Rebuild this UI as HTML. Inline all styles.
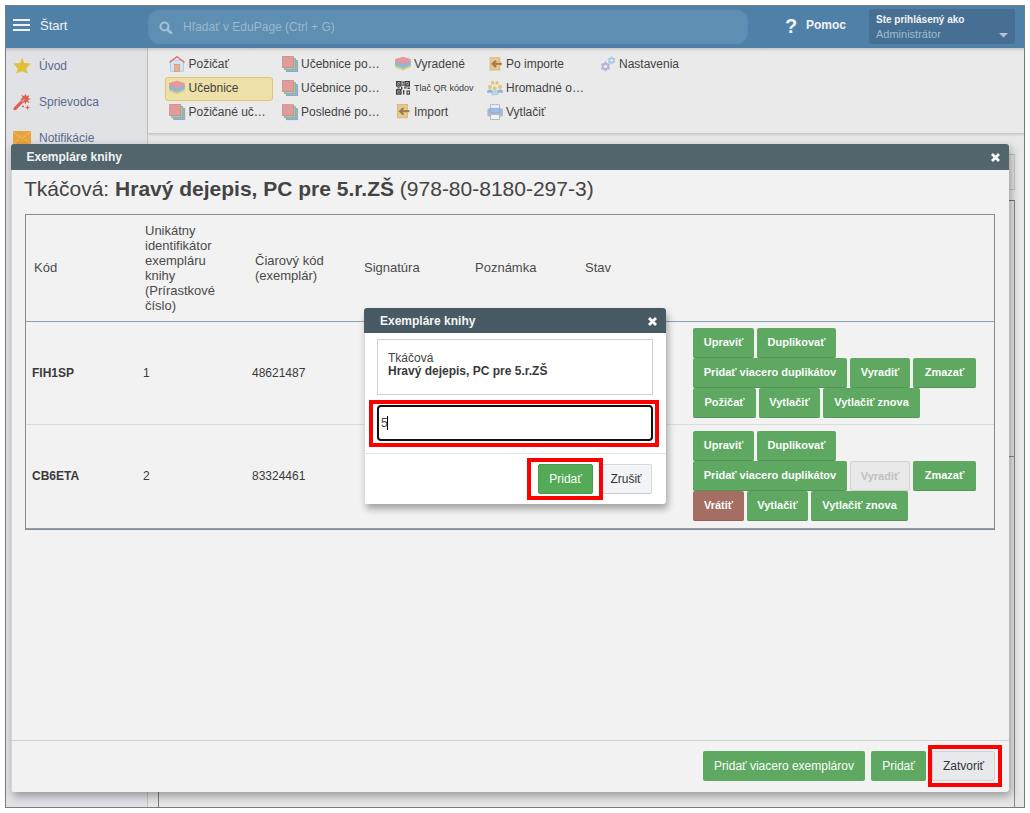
<!DOCTYPE html>
<html><head><meta charset="utf-8">
<style>
*{box-sizing:border-box;margin:0;padding:0}
html,body{width:1030px;height:813px;background:#fff;overflow:hidden;font-family:"Liberation Sans",sans-serif;position:relative}
.a{position:absolute}
.t{position:absolute;white-space:nowrap;line-height:1}
#frame{position:absolute;left:5px;top:5px;width:1020px;height:803px;border:1px solid #7b7b7b;overflow:hidden;background:#e8e8e8}
.btn{position:absolute;height:30px;background:#5fa862;border-bottom:1px solid #529557;border-radius:2px;color:#fbfdfb;font-size:11px;font-weight:bold;line-height:29px;text-align:center;white-space:nowrap}
.btn.br{background:#a56e63;border-bottom-color:#956055}
.btn.dis{background:#e9e9e9;border:1px solid #d2d2d2;color:#c0c0c0;line-height:28px}
.fbtn{position:absolute;height:30px;background:#5fa862;border-radius:2px;color:#fbfdfb;font-size:12px;line-height:30px;text-align:center;white-space:nowrap}
.th{position:absolute;font-size:13px;line-height:15px;color:#4a4a4a;white-space:nowrap}
.td{position:absolute;font-size:12px;line-height:14px;color:#3a3a3a;white-space:nowrap}
.tb{position:absolute;font-size:12px;color:#434343;white-space:nowrap;line-height:1}
.side{position:absolute;font-size:12px;color:#5a6a8c;white-space:nowrap;line-height:1}
</style></head>
<body>
<div id="frame"></div>

<!-- HEADER -->
<div class="a" style="left:6px;top:6px;width:1018px;height:42px;background:#4f81a8"></div>
<div class="a" style="left:13px;top:19px;width:17px;height:2px;background:#eef2f5"></div>
<div class="a" style="left:13px;top:24px;width:17px;height:2px;background:#eef2f5"></div>
<div class="a" style="left:13px;top:29px;width:17px;height:2px;background:#eef2f5"></div>
<div class="t" style="left:40px;top:19px;font-size:13px;color:#f2f4f6">Štart</div>
<div class="a" style="left:148px;top:9px;width:600px;height:35px;border-radius:12px;background:#5e8eb1;box-shadow:inset 0 1px 1px rgba(0,0,0,.08)"></div>
<svg class="a" style="left:159px;top:21px" width="14" height="13" viewBox="0 0 14 13"><circle cx="5.5" cy="5.5" r="4" fill="none" stroke="#a3bfd5" stroke-width="2.2"/><path d="M8.5 8.5 L12 12" stroke="#a3bfd5" stroke-width="2.6" stroke-linecap="round"/></svg>
<div class="t" style="left:183px;top:21px;font-size:12px;color:#9ab8d0">Hľadať v EduPage (Ctrl + G)</div>
<div class="t" style="left:785px;top:16px;font-size:20px;font-weight:bold;color:#f2f4f6">?</div>
<div class="t" style="left:806px;top:19px;font-size:12px;font-weight:bold;color:#f2f4f6">Pomoc</div>
<div class="a" style="left:869px;top:9px;width:146px;height:35px;border-radius:3px;background:#476f93"></div>
<div class="t" style="left:876px;top:15px;font-size:10px;font-weight:bold;color:#f2f4f6">Ste prihlásený ako</div>
<div class="t" style="left:876px;top:29px;font-size:11px;color:#9fbbd3">Administrátor</div>
<svg class="a" style="left:999px;top:33px" width="9" height="5" viewBox="0 0 9 5"><path d="M0 0 L9 0 L4.5 4.5 Z" fill="#b5c3d0"/></svg>

<!-- SIDEBAR -->
<div class="a" style="left:6px;top:48px;width:141px;height:759px;background:#e1e2e5"></div>
<div class="a" style="left:147px;top:48px;width:1px;height:759px;background:#c4c4c4"></div>
<div class="side" style="left:39px;top:60px">Úvod</div>
<div class="side" style="left:39px;top:96px">Sprievodca</div>
<div class="side" style="left:39px;top:132px">Notifikácie</div>

<!-- CONTENT / TOOLBAR -->
<div class="a" style="left:148px;top:48px;width:876px;height:86px;background:#eaeaea;border-bottom:1px solid #c8c8c8;box-shadow:0 1px 2px rgba(0,0,0,.12)"></div>
<div class="a" style="left:6px;top:48px;width:1018px;height:4px;background:linear-gradient(rgba(80,70,60,.22),rgba(0,0,0,.08) 40%,rgba(0,0,0,0))"></div>
<div class="a" style="left:158px;top:154px;width:857px;height:36px;border:1px solid #c8c8c8;background:#e6e6e6"></div>
<div class="a" style="left:158px;top:200px;width:857px;height:607px;border:1px solid #777;border-right-color:#888;border-bottom:none;background:#e8e8e8"></div>

<div class="a" style="left:1000px;top:456px;width:15px;height:1px;background:#8a8a8a"></div>
<!-- toolbar col 1 -->
<div class="tb" style="left:188.5px;top:58px">Požičať</div>
<div class="a" style="left:165px;top:77px;width:108px;height:24px;background:#ede0a9;border:1px solid #e1c56a;border-radius:3px"></div>
<div class="tb" style="left:188.5px;top:82px">Učebnice</div>
<div class="tb" style="left:188.5px;top:106px">Požičané uč…</div>
<!-- col 2 -->
<div class="tb" style="left:301px;top:58px">Učebnice po…</div>
<div class="tb" style="left:301px;top:82px">Učebnice po…</div>
<div class="tb" style="left:301px;top:106px">Posledné po…</div>
<!-- col 3 -->
<div class="tb" style="left:414px;top:58px">Vyradené</div>
<div class="t" style="left:414px;top:84px;font-size:9px;color:#3c3c3c">Tlač QR kódov</div>
<div class="tb" style="left:414px;top:106px">Import</div>
<!-- col 4 -->
<div class="tb" style="left:506px;top:58px">Po importe</div>
<div class="tb" style="left:506px;top:82px">Hromadné o…</div>
<div class="tb" style="left:506px;top:106px">Vytlačiť</div>
<!-- col 5 -->
<div class="tb" style="left:619px;top:58px">Nastavenia</div>

<svg class="a" style="left:0;top:0" width="700" height="150" viewBox="0 0 700 150">
<polygon points="22,57.2 24.2,62.9 31,63.4 26.1,68.5 27.7,73.6 22,71.3 16.3,73.6 17.8,68.5 13.2,63.4 20.2,62.9" fill="#e2bf3b"/>
<path d="M15 108.6 L23.2 100.4" stroke="#df5d52" stroke-width="3.2" stroke-linecap="round"/>
<polygon points="25.40,93.40 26.51,96.32 29.36,95.04 28.08,97.89 31.00,99.00 28.08,100.11 29.36,102.96 26.51,101.68 25.40,104.60 24.29,101.68 21.44,102.96 22.72,100.11 19.80,99.00 22.72,97.89 21.44,95.04 24.29,96.32" fill="#df5d52"/>
<path d="M21.6 102 L24.6 99" stroke="#e9c9c6" stroke-width="1"/>
<polygon points="27.60,104.70 28.24,106.96 30.50,107.60 28.24,108.24 27.60,110.50 26.96,108.24 24.70,107.60 26.96,106.96" fill="#df5d52"/>
<ellipse cx="23" cy="106.4" rx="1.1" ry="0.8" fill="#df5d52"/>
<rect x="13" y="131" width="18" height="14" fill="#e8a33a"/><path d="M13 131.5 L22 138.5 L31 131.5 M13 144.5 L19 139 M31 144.5 L25 139" stroke="#f5dcb0" stroke-width="0.8" stroke-dasharray="1 0.6" fill="none"/>
<rect x="170.5" y="60.2" width="13" height="11" fill="#d4e5f2" stroke="#b3cadd" stroke-width="0.9"/>
<rect x="174.6" y="64.3" width="4.8" height="7" fill="#e9b08c" stroke="#cf9574" stroke-width="0.7"/>
<path d="M169.5 62.5 L177 56.6 L184.5 62.5" stroke="#d8787a" stroke-width="1.5" fill="none"/>
<polygon points="169.0,87.5 177.0,84.5 184.7,87.5 184.7,91.5 177.0,94.8 169.0,91.5" fill="#e6d48c"/><polygon points="169.0,86.0 177.0,83.0 184.7,86.0 184.7,90.0 177.0,93.0 169.0,90.0" fill="#9fcb98"/><polygon points="169.0,84.5 177.0,81.5 184.7,84.5 184.7,88.5 177.0,91.5 169.0,88.5" fill="#8fb4de"/><polygon points="169.0,83.0 177.0,80.8 184.7,83.0 184.7,85.5 177.0,88.2 169.0,85.5" fill="#e49a9a"/>
<polygon points="395.0,63.5 403.0,60.5 410.7,63.5 410.7,67.5 403.0,70.8 395.0,67.5" fill="#e6d48c"/><polygon points="395.0,62.0 403.0,59.0 410.7,62.0 410.7,66.0 403.0,69.0 395.0,66.0" fill="#9fcb98"/><polygon points="395.0,60.5 403.0,57.5 410.7,60.5 410.7,64.5 403.0,67.5 395.0,64.5" fill="#8fb4de"/><polygon points="395.0,59.0 403.0,56.8 410.7,59.0 410.7,61.5 403.0,64.2 395.0,61.5" fill="#e49a9a"/>
<rect x="173.7" y="108.5" width="11" height="11" fill="#93b3da" stroke="#7f9fc6" stroke-width="0.8"/><rect x="171.7" y="106.5" width="11" height="11" fill="#a8c9a2" stroke="#8eb08a" stroke-width="0.8"/><rect x="169.7" y="104.5" width="11" height="11" fill="#e09b9b" stroke="#c98b8b" stroke-width="0.8"/>
<rect x="286.5" y="60.6" width="11" height="11" fill="#93b3da" stroke="#7f9fc6" stroke-width="0.8"/><rect x="284.5" y="58.6" width="11" height="11" fill="#a8c9a2" stroke="#8eb08a" stroke-width="0.8"/><rect x="282.5" y="56.6" width="11" height="11" fill="#e09b9b" stroke="#c98b8b" stroke-width="0.8"/>
<rect x="286.5" y="84.6" width="11" height="11" fill="#93b3da" stroke="#7f9fc6" stroke-width="0.8"/><rect x="284.5" y="82.6" width="11" height="11" fill="#a8c9a2" stroke="#8eb08a" stroke-width="0.8"/><rect x="282.5" y="80.6" width="11" height="11" fill="#e09b9b" stroke="#c98b8b" stroke-width="0.8"/>
<rect x="286.5" y="108.7" width="11" height="11" fill="#93b3da" stroke="#7f9fc6" stroke-width="0.8"/><rect x="284.5" y="106.7" width="11" height="11" fill="#a8c9a2" stroke="#8eb08a" stroke-width="0.8"/><rect x="282.5" y="104.7" width="11" height="11" fill="#e09b9b" stroke="#c98b8b" stroke-width="0.8"/>
<g fill="none" stroke="#3d3d3d" stroke-width="1.4"><rect x="396.7" y="81.7" width="4.2" height="4.2"/><rect x="405.1" y="81.7" width="4.2" height="4.2"/><rect x="396.7" y="89.8" width="4.2" height="4.2"/><path d="M397.7 82.7 L399.9 84.9 M399.9 82.7 L397.7 84.9 M406.1 82.7 L408.3 84.9 M408.3 82.7 L406.1 84.9 M397.7 90.8 L399.9 93 M399.9 90.8 L397.7 93" stroke-width="0.9"/></g><g fill="#3d3d3d"><rect x="402.5" y="81.3" width="1.4" height="2.4"/><rect x="402" y="84.5" width="2.4" height="1.2"/><rect x="397.5" y="87.3" width="2.2" height="1.2"/><rect x="401" y="87" width="1.3" height="2.5"/><rect x="404" y="87.3" width="2.6" height="1.2"/><rect x="407.5" y="87.5" width="2.5" height="1.4"/><rect x="403" y="90" width="1.3" height="4.5"/><rect x="406.5" y="90.5" width="3.5" height="4.2"/></g><rect x="407.6" y="91.6" width="1.3" height="1.9" fill="#ebebeb"/>
<rect x="397.5" y="104.5" width="10" height="13.4" fill="#e7c98c" stroke="#d2b577" stroke-width="0.8"/><path d="M409.5 111.2 L400.5 111.2" stroke="#9c7c4c" stroke-width="2"/><path d="M403.5 108.0 L400 111.2 L403.5 114.4" stroke="#9c7c4c" stroke-width="2" fill="none"/>
<rect x="490.1" y="57.7" width="9.8" height="12.3" fill="#e7c98c" stroke="#d2b577" stroke-width="0.8"/><path d="M501.90000000000003 63.85 L493.1 63.85" stroke="#9c7c4c" stroke-width="2"/><path d="M496.1 60.65 L492.6 63.85 L496.1 67.05" stroke="#9c7c4c" stroke-width="2" fill="none"/>
<g fill="#8fb3de"><path d="M487 92.8 Q487 89.6 490 89.6 Q493 89.6 493 92.8Z"/><path d="M497 92.8 Q497 89.6 500 89.6 Q503 89.6 503 92.8Z"/></g>
<path d="M491.8 94.8 L491.8 92.5 Q491.8 91 494.8 91 Q497.8 91 497.8 92.5 L497.8 94.8Z" fill="#b9d5ea" stroke="#9ec0dc" stroke-width="0.6"/>
<g fill="#dfc679"><circle cx="492.7" cy="82.9" r="1.8"/><circle cx="497" cy="82.9" r="1.8"/><circle cx="490" cy="87" r="2"/><circle cx="500" cy="87" r="2"/><circle cx="494.8" cy="88.6" r="2"/></g>
<rect x="490.6" y="104.7" width="8.8" height="6" fill="#f4f4f4" stroke="#a9b6c4" stroke-width="0.9"/>
<rect x="487.4" y="108.2" width="15.4" height="8.4" rx="1.6" fill="#aab9c9"/>
<rect x="490" y="108.2" width="10" height="4.4" rx="1" fill="#9dbee7" stroke="#86a8d3" stroke-width="0.6"/>
<rect x="490.6" y="114.6" width="8.8" height="4.8" fill="#f4f4f4" stroke="#a9b6c4" stroke-width="0.9"/>
<polygon points="605.50,61.20 607.36,63.29 610.09,63.85 609.21,66.50 610.09,69.15 607.36,69.71 605.50,71.80 603.64,69.71 600.91,69.15 601.79,66.50 600.91,63.85 603.64,63.29" fill="#bcb0dc"/><circle cx="605.5" cy="66.5" r="1.70" fill="#ebebeb"/>
<polygon points="611.60,56.00 613.11,57.69 615.32,58.15 614.61,60.30 615.32,62.45 613.11,62.91 611.60,64.60 610.10,62.91 607.88,62.45 608.59,60.30 607.88,58.15 610.10,57.69" fill="#a9cae4"/><circle cx="611.6" cy="60.3" r="1.38" fill="#ebebeb"/>
</svg>

<!-- MODAL -->
<div class="a" style="left:11px;top:144px;width:998px;height:648px;background:#f2f2f2;border-radius:3px;box-shadow:2px 4px 10px rgba(0,0,0,.35);overflow:hidden">
  <div class="a" style="left:0;top:26px;width:1px;height:622px;background:#d8d8d8"></div>
  <div class="a" style="left:0;top:0;width:998px;height:26px;background:#52646c"></div>
</div>
<div class="t" style="left:26.5px;top:151px;font-size:12px;font-weight:bold;color:#f0f2f3">Exempláre knihy</div>
<svg class="a" style="left:991px;top:153px" width="9" height="9" viewBox="0 0 9 9"><path d="M1 1 L8 8 M8 1 L1 8" stroke="#fff" stroke-width="2.8"/></svg>
<div class="t" style="left:24px;top:178px;font-size:21px;color:#444">Tkáčová: <b>Hravý dejepis, PC pre 5.r.ZŠ</b> (978-80-8180-297-3)</div>

<!-- TABLE -->
<div class="a" style="left:25px;top:214px;width:970px;height:316px;border:1px solid #8a8a8a"></div>
<div class="a" style="left:26px;top:528px;width:968px;height:1px;background:#8fa0b0"></div>
<div class="a" style="left:26px;top:321px;width:968px;height:1px;background:#8fa0b0"></div>
<div class="a" style="left:26px;top:424px;width:968px;height:1px;background:#dcdcdc"></div>
<div class="th" style="left:34px;top:260px">Kód</div>
<div class="th" style="left:145px;top:223px">Unikátny<br>identifikátor<br>exempláru<br>knihy<br>(Prírastkové<br>číslo)</div>
<div class="th" style="left:255px;top:253px">Čiarový kód<br>(exemplár)</div>
<div class="th" style="left:364px;top:260px">Signatúra</div>
<div class="th" style="left:475px;top:260px">Poznámka</div>
<div class="th" style="left:585px;top:260px">Stav</div>

<div class="td" style="left:32px;top:366px;font-weight:bold">FIH1SP</div>
<div class="td" style="left:143px;top:366px">1</div>
<div class="td" style="left:252px;top:366px">48621487</div>
<div class="td" style="left:32px;top:469px;font-weight:bold">CB6ETA</div>
<div class="td" style="left:143px;top:469px">2</div>
<div class="td" style="left:252px;top:469px">83324461</div>

<!-- row 1 buttons -->
<div class="btn" style="left:693px;top:328px;width:61px">Upraviť</div>
<div class="btn" style="left:757px;top:328px;width:79px">Duplikovať</div>
<div class="btn" style="left:693px;top:358px;width:154px">Pridať viacero duplikátov</div>
<div class="btn" style="left:850px;top:358px;width:60px">Vyradiť</div>
<div class="btn" style="left:913px;top:358px;width:63px">Zmazať</div>
<div class="btn" style="left:693px;top:388px;width:63px">Požičať</div>
<div class="btn" style="left:759px;top:388px;width:61px">Vytlačiť</div>
<div class="btn" style="left:823px;top:388px;width:97px">Vytlačiť znova</div>
<!-- row 2 buttons -->
<div class="btn" style="left:693px;top:431px;width:61px">Upraviť</div>
<div class="btn" style="left:757px;top:431px;width:79px">Duplikovať</div>
<div class="btn" style="left:693px;top:461px;width:154px">Pridať viacero duplikátov</div>
<div class="btn dis" style="left:850px;top:461px;width:60px">Vyradiť</div>
<div class="btn" style="left:913px;top:461px;width:63px">Zmazať</div>
<div class="btn br" style="left:693px;top:491px;width:51px">Vrátiť</div>
<div class="btn" style="left:747px;top:491px;width:61px">Vytlačiť</div>
<div class="btn" style="left:811px;top:491px;width:97px">Vytlačiť znova</div>

<!-- footer -->
<div class="a" style="left:11px;top:740px;width:998px;height:1px;background:#d4d4d4"></div>
<div class="fbtn" style="left:703px;top:751px;width:162px">Pridať viacero exemplárov</div>
<div class="fbtn" style="left:871px;top:751px;width:55px">Pridať</div>
<div class="a" style="left:932px;top:751px;width:63px;height:30px;background:#e8e9ec;border:1px solid #d0d2d6;border-radius:2px;font-size:12px;line-height:28px;color:#333;text-align:center">Zatvoriť</div>
<div class="a" style="left:928px;top:745px;width:74px;height:42px;border:4px solid #f00"></div>

<!-- SUB DIALOG -->
<div class="a" style="left:364px;top:308px;width:302px;height:196px;background:#fff;border-radius:3px;box-shadow:2px 5px 7px rgba(0,0,0,.32);overflow:hidden">
  <div class="a" style="left:0;top:25px;width:1px;height:171px;background:#dcdcdc"></div>
  <div class="a" style="left:0;top:0;width:302px;height:25px;background:#485a64"></div>
</div>
<div class="t" style="left:380px;top:315px;font-size:12px;font-weight:bold;color:#f4f6f7">Exempláre knihy</div>
<svg class="a" style="left:648px;top:317px" width="9" height="9" viewBox="0 0 9 9"><path d="M1 1 L8 8 M8 1 L1 8" stroke="#fff" stroke-width="2.8"/></svg>
<div class="a" style="left:377px;top:339px;width:276px;height:56px;border:1px solid #cfcfcf;background:#fff"></div>
<div class="t" style="left:388px;top:352px;font-size:12px;color:#444">Tkáčová</div>
<div class="t" style="left:388px;top:365px;font-size:12px;font-weight:bold;color:#3a3a3a">Hravý dejepis, PC pre 5.r.ZŠ</div>
<div class="a" style="left:369px;top:400px;width:290px;height:47px;border:4px solid #f00"></div>
<div class="a" style="left:377px;top:405px;width:276px;height:36px;border:2px solid #111;border-radius:4px;background:#fff"></div>
<div class="t" style="left:381px;top:417px;font-size:12px;color:#444">5</div>
<div class="a" style="left:387px;top:416px;width:1px;height:14px;background:#000"></div>
<div class="a" style="left:364px;top:453px;width:302px;height:1px;background:#e2e2e2"></div>
<div class="fbtn" style="left:538px;top:464px;width:55px;height:30px;line-height:29px;background:#55aa58;border:1px solid #4a9a4e">Pridať</div>
<div class="a" style="left:602px;top:464px;width:50px;height:30px;background:#f3f4f8;border:1px solid #d8dadd;border-bottom-color:#c8cacd;border-radius:2px;font-size:12px;line-height:28px;text-indent:-2px;color:#333;text-align:center">Zrušiť</div>
<div class="a" style="left:527px;top:458px;width:76px;height:42px;border:4px solid #f00"></div>

</body></html>
